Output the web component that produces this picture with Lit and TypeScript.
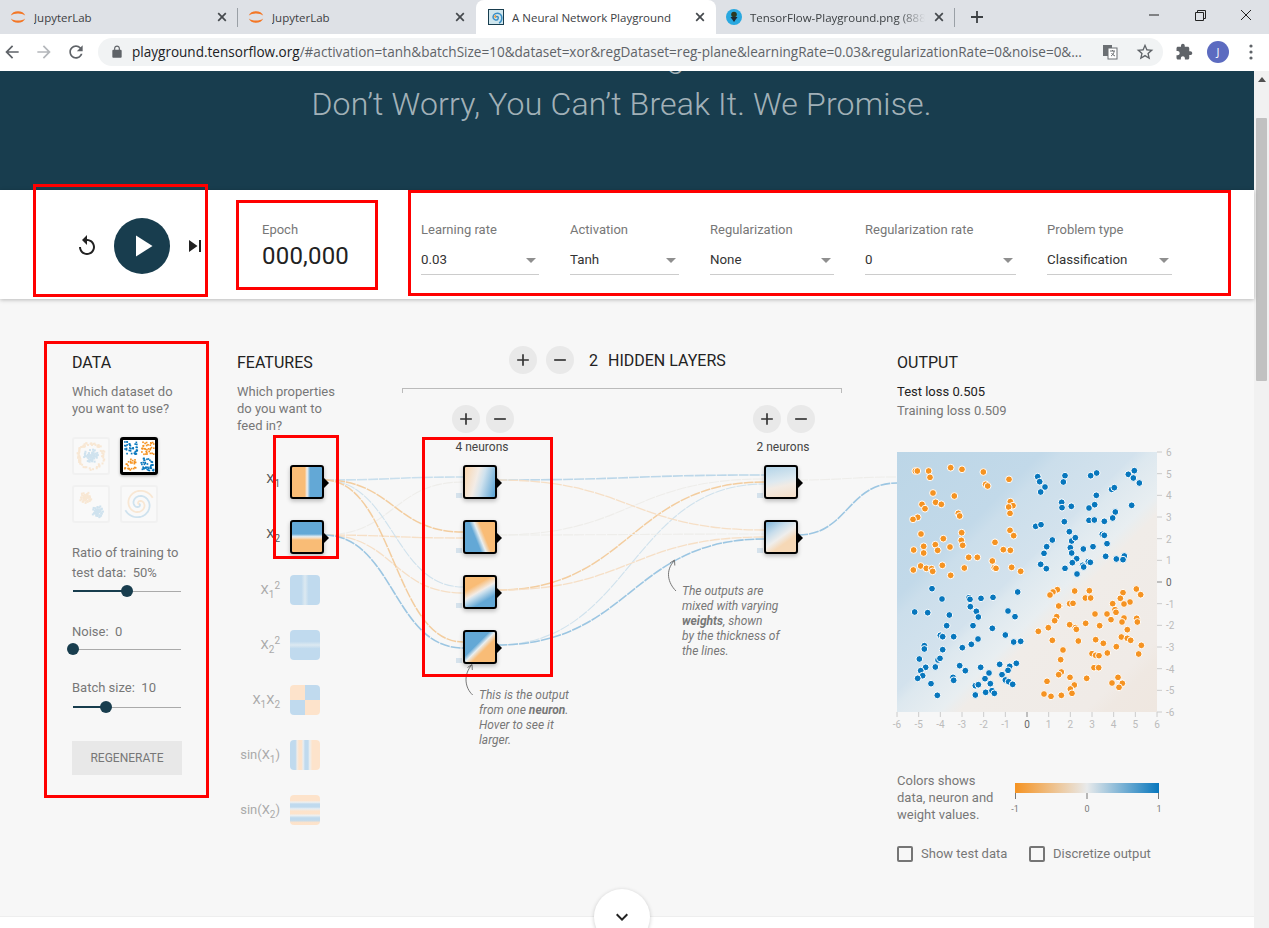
import { LitElement, html, css, svg } from 'lit';
import { customElement } from 'lit/decorators.js';

type Pt = [number, number];

const ORANGE = '#f59322';
const BLUE = '#0877bd';

// output plot samples, traced at 3x so 1 unit = 1/3 px
const ORANGE_PTS: Pt[] = [
  [105,93],[111,93],[145,93],[149,112],[211,83],[245,88],[309,96],[316,133],[322,138],[386,118],[158,159],[222,168],[166,187],[183,193],[125,193],[134,206],[112,232],[98,238],[234,220],[238,228],[390,185],[398,197],[385,201],[389,220],[122,282],[244,278],[389,271],[400,287],[189,296],[243,301],[344,307],[130,319],[165,314],[209,321],[247,316],[100,330],[172,331],[130,339],[369,329],[390,331],[265,352],[291,352],[336,363],[121,378],[138,385],[154,386],[157,394],[99,390],[186,376],[252,384],[342,383],[347,385],[394,382],[421,394],[211,406],
  [531,449],[518,456],[509,465],[583,453],[627,452],[768,447],[781,464],[728,458],[720,475],[615,474],[631,474],[749,486],[731,492],[697,491],[568,491],[578,490],[538,498],[535,498],[704,509],[707,517],[644,522],[680,522],[529,530],[523,542],[692,539],[731,534],[725,546],[769,535],[771,546],[616,550],[658,557],[568,554],[585,563],[588,568],[504,563],[474,574],[741,569],[723,591],[741,595],[751,601],[594,603],[646,599],[669,610],[516,601],[783,616],[708,620],[548,630],[635,641],[646,646],[656,647],[681,639],[775,642],[541,659],[641,683],[655,683],[543,696],[535,704],[619,715],[569,712],[500,724],[582,735],[695,729],[713,712],[726,730],[716,742],[570,747],[575,760],[491,762],[512,769],[543,766],
];
const BLUE_PTS: Pt[] = [
  [472,110],[478,125],[554,107],[549,126],[631,107],[649,99],[744,103],[762,92],[759,114],[777,129],[494,141],[481,156],[648,166],[694,148],[702,143],[544,187],[545,203],[573,199],[626,204],[643,194],[754,196],[705,216],[697,234],[552,245],[626,241],[642,240],[672,244],[466,259],[482,254],[567,275],[574,303],[585,293],[666,283],[672,286],[680,311],[516,300],[499,320],[491,340],[570,323],[574,339],[609,327],[638,320],[676,349],[708,357],[732,348],[728,359],[589,356],[576,368],[624,365],[630,367],[481,373],[498,386],[554,385],[607,376],[610,381],[590,402],
  [155,446],[412,456],[185,477],[266,473],[269,478],[302,475],[338,472],[270,500],[288,514],[294,531],[103,516],[142,518],[207,525],[383,513],[404,530],[199,557],[278,557],[336,565],[180,586],[187,590],[220,590],[293,597],[375,585],[400,606],[421,604],[273,613],[246,623],[132,617],[132,627],[187,629],[117,657],[173,660],[179,655],[136,682],[165,681],[238,677],[121,692],[127,707],[112,715],[255,692],[301,682],[358,673],[388,679],[408,670],[383,691],[326,699],[365,704],[218,712],[220,721],[314,716],[375,720],[385,725],[397,733],[152,731],[285,737],[294,734],[330,731],[171,766],[285,765],[316,757],[335,752],[342,760],
];

const BL = '#63a8d6';
const OR = '#f9bc76';
const FB = '#c0daee';
const FO = '#fde3cb';

interface FeatureNode { label: unknown; bg: string; }

const INPUTS: FeatureNode[] = [
  { label: html`X<sub>1</sub>`, bg: `linear-gradient(90deg, ${OR} 0 43%, #f2e2d2 48%, #dce8f0 52%, ${BL} 60%)` },
  { label: html`X<sub>2</sub>`, bg: `linear-gradient(180deg, ${BL} 0 40%, #dce8f0 48%, #f5e0c8 53%, ${OR} 60%)` },
  { label: html`X<sub>1</sub><sup>2</sup>`, bg: `linear-gradient(90deg, ${FB} 0 38%, #dce9f1 50%, ${FB} 62%)` },
  { label: html`X<sub>2</sub><sup>2</sup>`, bg: `linear-gradient(180deg, ${FB} 0 38%, #dce9f1 50%, ${FB} 62%)` },
  { label: html`X<sub>1</sub>X<sub>2</sub>`, bg: `conic-gradient(${FB} 0 25%, ${FO} 25% 50%, ${FB} 50% 75%, ${FO} 75%)` },
  { label: html`sin(X<sub>1</sub>)`, bg: `linear-gradient(90deg, ${FB} 0 18%, #f2ece6 24%, ${FO} 30% 38%, #e8eef2 44%, ${FB} 50% 60%, #eef0f0 66%, ${FO} 74%)` },
  { label: html`sin(X<sub>2</sub>)`, bg: `linear-gradient(180deg, ${FO} 0 18%, #eef0f0 24%, ${FB} 30% 40%, #e8eef2 46%, ${FO} 54% 62%, #eef0f0 68%, ${FB} 76% 84%, ${FO} 92%)` },
];

const LAYER1 = [
  `linear-gradient(105deg, #f8d5ae 0, #f3ece6 38%, #cfe2ee 56%, ${BL} 95%)`,
  `linear-gradient(68deg, ${BL} 0 38%, #e8eef0 50%, ${OR} 62%)`,
  `linear-gradient(150deg, ${OR} 0 30%, #f3ece6 48%, #cfe2ee 54%, ${BL} 75%)`,
  `linear-gradient(135deg, ${BL} 0 40%, #e8eef0 50%, ${OR} 62%)`,
];
const LAYER2 = [
  `linear-gradient(168deg, #b3d4e8 0, #dde9f0 45%, #f2ebe4 62%, #f6dfc8 100%)`,
  `linear-gradient(145deg, #7fb5da 0, #c9deec 30%, #efeeec 50%, #f6d8b6 68%)`,
];

const STRONG_O = { c: '#f3cd9f', w: 1.5 };
const SOFT_O = { c: '#f6dfc6', w: 1.3 };
const STRONG_B = { c: '#9cc6e2', w: 1.6 };
const SOFT_B = { c: '#d0e2ed', w: 1.1 };
const FAINT = { c: '#eeedea', w: 1.1 };

// [x0, y0, x1, y1, style], relative to the network box
const LINKS: [number, number, number, number, { c: string; w: number }][] = [
  [87, 182, 226, 129, FAINT],
  [87, 127, 226, 124, { c: '#c9dfed', w: 1.6 }],
  [87, 127, 226, 179, STRONG_O],
  [87, 182, 226, 185, SOFT_O],
  [87, 127, 226, 234, SOFT_B],
  [87, 182, 226, 240, SOFT_O],
  [87, 127, 226, 289, STRONG_O],
  [87, 182, 226, 295, STRONG_B],
  [260, 127, 527, 122, { c: '#bcd7e9', w: 1.6 }],
  [260, 182, 527, 126, FAINT],
  [260, 237, 527, 129, STRONG_O],
  [260, 292, 527, 131, SOFT_B],
  [260, 127, 527, 177, SOFT_O],
  [260, 182, 527, 181, FAINT],
  [260, 237, 527, 184, SOFT_O],
  [260, 292, 527, 186, STRONG_B],
  [561, 127, 660, 124, FAINT],
  [561, 182, 660, 130, STRONG_B],
];

const curve = (x0: number, y0: number, x1: number, y1: number) => {
  const m = (x0 + x1) / 2;
  return `M${x0} ${y0}C${m} ${y0} ${m} ${y1} ${x1} ${y1}`;
};

// tiny repeatable random so the dataset thumbnails stay the same on every load
const rng = (seed: number) => () => {
  seed = (seed * 16807) % 2147483647;
  return seed / 2147483647;
};

const xorDots = () => {
  const r = rng(7);
  const out = [];
  for (let i = 0; i < 170; i++) {
    const x = r() * 30 + 1;
    const y = r() * 30 + 1;
    if (Math.abs(x - 16) < 2 || Math.abs(y - 16) < 2) continue;
    const c = (x - 16) * (y - 16) > 0 ? BLUE : ORANGE;
    out.push(svg`<rect x=${x} y=${y} width="1.7" height="1.7" fill=${c}></rect>`);
  }
  return out;
};

const circleDots = () => {
  const r = rng(11);
  const out = [];
  for (let i = 0; i < 70; i++) {
    const a = r() * 6.28;
    const d = r() * 7;
    out.push(svg`<rect x=${16 + Math.cos(a) * d} y=${16 + Math.sin(a) * d} width="2" height="2" fill=${BLUE}></rect>`);
    const e = 11 + r() * 3;
    out.push(svg`<rect x=${16 + Math.cos(a * 3) * e} y=${16 + Math.sin(a * 3) * e} width="2" height="2" fill=${ORANGE}></rect>`);
  }
  return out;
};

const gaussDots = () => {
  const r = rng(23);
  const out = [];
  for (let i = 0; i < 60; i++) {
    const a = r() * 6.28;
    const d = r() * 6;
    out.push(svg`<rect x=${11 + Math.cos(a) * d} y=${10 + Math.sin(a) * d} width="2" height="2" fill=${ORANGE}></rect>`);
    out.push(svg`<rect x=${23 + Math.sin(a) * d} y=${24 + Math.cos(a) * d} width="2" height="2" fill=${BLUE}></rect>`);
  }
  return out;
};

const spiral = (offset: number) => {
  let d = '';
  for (let t = 0; t <= 100; t++) {
    const a = (t / 100) * 9 + offset;
    const rad = (t / 100) * 15;
    d += `${t ? 'L' : 'M'}${(17 + Math.cos(a) * rad).toFixed(1)} ${(17 + Math.sin(a) * rad).toFixed(1)}`;
  }
  return d;
};

const TICKS = [-6, -5, -4, -3, -2, -1, 0, 1, 2, 3, 4, 5, 6];

@customElement('app-root')
export class AppRoot extends LitElement {
  static styles = css`
    :host {
      display: block;
      width: 1269px;
      height: 928px;
      overflow: hidden;
      position: relative;
      font-family: Roboto, "Liberation Sans", sans-serif;
      color: #777;
      background: #fff;
    }

    /* browser chrome */
    .tabstrip {
      display: flex;
      align-items: stretch;
      height: 34px;
      background: #dee1e6;
      font-family: "Open Sans", sans-serif;
      font-size: 11.5px;
      color: #3c4043;
    }
    .tab {
      box-sizing: border-box;
      width: 238px;
      display: flex;
      align-items: center;
      gap: 8px;
      padding: 0 10px;
      position: relative;
      white-space: nowrap;
    }
    .tab.sep::after {
      content: "";
      position: absolute;
      right: 0;
      top: 8px;
      bottom: 7px;
      width: 1px;
      background: #9aa0a6;
    }
    .tab.active {
      width: 240px;
      background: #fff;
      border-radius: 8px 8px 0 0;
      padding-left: 12px;
    }
    .tab .name {
      flex: 1;
      overflow: hidden;
    }
    .tab .name.fade {
      -webkit-mask-image: linear-gradient(90deg, #000 85%, transparent);
      mask-image: linear-gradient(90deg, #000 85%, transparent);
    }
    .tab .close {
      flex: none;
      width: 12px;
      height: 12px;
    }
    .newtab {
      width: 16px;
      height: 16px;
      margin: 9px 0 0 14px;
    }
    .winctl {
      margin-left: auto;
      display: flex;
      align-items: flex-start;
    }
    .winctl svg {
      width: 46px;
      height: 30px;
    }
    .toolbar {
      height: 37px;
      box-sizing: border-box;
      display: flex;
      align-items: center;
      background: #fff;
      padding: 0 0 2px 2px;
    }
    .navicon {
      width: 20px;
      height: 20px;
      margin-right: 12px;
      fill: #5f6368;
    }
    .omnibox {
      width: 1065px;
      height: 28px;
      box-sizing: border-box;
      border-radius: 14px;
      background: #f1f3f4;
      display: flex;
      align-items: center;
      padding: 0 8px 0 12px;
      font-family: "Open Sans", sans-serif;
      font-size: 13.55px;
      color: #5f6368;
      white-space: nowrap;
    }
    .omnibox .host { color: #202124; }
    .omnibox .url {
      margin-left: 8px;
      flex: none;
    }
    .omnibox svg { flex: none; }
    .omnibox .star { margin-left: 17px; }
    .omnibox .trans { margin-left: auto; }
    .tools {
      display: flex;
      align-items: center;
      fill: #5f6368;
    }
    .avatar {
      width: 22px;
      height: 22px;
      border-radius: 50%;
      background: #5c6bc0;
      color: #fff;
      font: 11px "Open Sans", sans-serif;
      display: flex;
      align-items: center;
      justify-content: center;
      margin: 0 20px 0 14px;
    }

    /* page + scrollbar */
    .window { display: flex; height: 857px; }
    .page { flex: 1; min-width: 0; display: flex; flex-direction: column; }
    .scrollbar {
      width: 15px;
      background: #f1f1f1;
      display: flex;
      flex-direction: column;
      align-items: center;
    }
    .scrollbar .up {
      width: 0;
      height: 0;
      margin-top: 6px;
      border: 4px solid transparent;
      border-top: 0;
      border-bottom: 5px solid #505050;
    }
    .scrollbar .thumb {
      width: 100%;
      height: 267px;
      margin-top: 34px;
      background: #c1c1c1;
    }

    .hero {
      height: 119px;
      overflow: hidden;
      background: #183d4e;
      color: rgba(255, 255, 255, 0.62);
      font-size: 32px;
      font-weight: 300;
      line-height: 40px;
      letter-spacing: 0.18px;
      text-align: center;
      padding-right: 11px;
    }
    .hero p {
      margin: 0;
      white-space: nowrap;
    }
    .hero .above { margin-top: -34px; }
    .hero .above + p { margin-top: 7px; }

    .controls {
      height: 109px;
      box-sizing: border-box;
      background: #fff;
      box-shadow: 0 1px 4px rgba(0, 0, 0, 0.25);
      position: relative;
      display: flex;
      padding: 32px 0 0 75px;
    }
    .playback {
      display: flex;
      align-items: center;
      gap: 15px;
      height: 56px;
      margin-top: -4px;
    }
    .playback svg { width: 24px; height: 24px; fill: #222; }
    .playback .skip { margin-left: -2px; }
    .playbtn {
      width: 56px;
      height: 56px;
      border-radius: 50%;
      background: #183d4e;
      display: flex;
      align-items: center;
      justify-content: center;
    }
    .playback .playbtn svg { width: 36px; height: 36px; fill: #fff; }
    .epoch { margin-left: 55px; width: 159px; }
    .ctl-label { font-size: 13px; line-height: 16px; color: #777; }
    .epoch-val {
      font-size: 24px;
      line-height: 30px;
      margin-top: 3px;
      color: #222;
      letter-spacing: 0.2px;
    }
    .selects {
      display: grid;
      grid-template-columns: 118px 109px 124px 151px 125px;
      column-gap: 31px;
    }
    .select {
      margin-top: 13px;
      padding-bottom: 5px;
      line-height: 18px;
      font-size: 13.33px;
      color: #333;
      border-bottom: 1px solid #ccc;
      display: flex;
      justify-content: space-between;
      align-items: center;
    }
    .select i {
      width: 0;
      height: 0;
      margin-right: 3px;
      border: 5px solid transparent;
      border-bottom: 0;
      border-top: 5px solid #8f8f8f;
    }

    .workspace {
      height: 617px;
      box-sizing: border-box;
      display: flex;
      background: #f7f7f7;
      padding: 54px 0 0 72px;
    }
    h4 {
      margin: 0;
      padding-top: 1px;
      font-size: 16px;
      line-height: 18px;
      font-weight: 400;
      color: #222;
      text-transform: uppercase;
    }
    .note {
      margin: 11px 0 0;
      font-size: 13px;
      line-height: 17px;
      color: #777;
    }

    .data { width: 165px; flex: none; }
    .thumbs {
      display: grid;
      grid-template-columns: 38px 38px;
      gap: 10px;
      margin-top: 20px;
    }
    .thumb {
      box-sizing: border-box;
      width: 38px;
      height: 38px;
      border: 2px solid #f1f1f1;
      border-radius: 3px;
      background: #f9f9f9;
    }
    .thumb svg { display: block; width: 34px; height: 34px; opacity: 0.17; }
    .thumb.on { border: 3px solid #000; background: #fff; box-shadow: 0 1px 3px rgba(0, 0, 0, 0.3); }
    .thumb.on svg { width: 32px; height: 32px; opacity: 1; }
    .param { font-size: 13px; line-height: 20px; color: #777; }
    .ratio { margin-top: 20px; }
    .noise { margin-top: 23px; }
    .batch { margin-top: 21px; }
    .slider {
      position: relative;
      width: 108px;
      height: 16px;
      margin: 1px 0 0 1px;
      display: flex;
      align-items: center;
    }
    .slider.tight { margin-top: 0; }
    .slider.flush { margin-top: -1px; }
    .slider .fill { height: 2px; background: #183d4e; }
    .slider .rest { flex: 1; height: 1px; background: #aaa; }
    .slider .knob {
      position: absolute;
      top: 2px;
      width: 12px;
      height: 12px;
      margin-left: -6px;
      border-radius: 50%;
      background: #183d4e;
    }
    .regen {
      width: 110px;
      height: 34px;
      margin-top: 26px;
      background: #e8e8e8;
      color: #777;
      font-size: 12px;
      display: flex;
      align-items: center;
      justify-content: center;
      text-transform: uppercase;
    }

    /* network diagram */
    .net { position: relative; width: 660px; height: 560px; flex: none; }
    .net > svg {
      position: absolute;
      left: 0;
      top: 0;
      overflow: visible;
    }
    .net-head { display: flex; margin-top: -7px; position: relative; }
    .features-head { width: 165px; flex: none; padding-top: 7px; }
    .layers-head { width: 440px; }
    .layer-row {
      display: flex;
      align-items: center;
      gap: 9px;
      padding-left: 107px;
      height: 28px;
    }
    .layer-row .count { margin-left: 6px; font-size: 16px; color: #222; }
    .layer-row .word { margin-left: 1px; font-size: 16px; color: #222; text-transform: uppercase; }
    .bracket {
      height: 4px;
      margin-top: 14px;
      border: 1px solid #bbb;
      border-bottom: 0;
    }
    .round {
      width: 28px;
      height: 28px;
      border-radius: 50%;
      background: #e9e9e9;
      display: flex;
      align-items: center;
      justify-content: center;
      flex: none;
    }
    .round svg { width: 20px; height: 20px; fill: #333; }
    .round.abs { position: absolute; }
    .node {
      position: absolute;
      box-sizing: border-box;
      width: 34px;
      height: 34px;
      border: 2px solid #000;
      border-radius: 3px;
      box-shadow: 0 2px 4px rgba(0, 0, 0, 0.25);
    }
    .node::after {
      content: "";
      position: absolute;
      right: -7px;
      top: 11px;
      border: 5px solid transparent;
      border-right: 0;
      border-left: 5px solid #000;
    }
    .node.faded {
      width: 30px;
      height: 30px;
      border: 0;
      border-radius: 4px;
      box-shadow: none;
    }
    .node.faded::after { display: none; }
    .flabel {
      position: absolute;
      left: -17px;
      width: 60px;
      text-align: right;
      font-size: 13px;
      line-height: 20px;
      color: #aaa;
      white-space: nowrap;
    }
    .flabel.on { color: #555; }
    .flabel sub, .flabel sup { font-size: 10px; line-height: 0; }
    .nlabel {
      position: absolute;
      width: 80px;
      text-align: center;
      font-size: 12px;
      line-height: 14px;
      color: #444;
    }
    .bias {
      position: absolute;
      width: 6px;
      height: 5px;
      background: #d5e2ec;
    }
    .hint {
      position: absolute;
      margin: 0;
      font-size: 12px;
      line-height: 15px;
      font-style: italic;
      color: #777;
      white-space: nowrap;
    }

    /* output */
    .output { flex: 1; min-width: 0; }
    .loss { font-size: 13px; line-height: 20px; color: #777; }
    .loss.top { margin-top: 10px; line-height: 19px; color: #222; }
    .plot { display: block; margin-top: 31px; overflow: visible; }
    .legend { display: flex; margin-top: 35px; }
    .legend svg { overflow: visible; }
    .legend-text {
      width: 118px;
      flex: none;
      font-size: 13px;
      line-height: 17px;
      color: #777;
    }
    .checks { display: flex; margin-top: 23px; }
    .check {
      width: 132px;
      display: flex;
      align-items: center;
      gap: 8px;
      font-size: 13px;
      line-height: 16px;
      color: #777;
    }
    .check i {
      box-sizing: border-box;
      width: 16px;
      height: 16px;
      border: 2px solid #757575;
      border-radius: 2px;
    }

    .footer { height: 12px; background: #fff; border-top: 1px solid #eee; box-sizing: border-box; }
    .chevron {
      position: absolute;
      left: 594px;
      top: 889px;
      width: 56px;
      height: 56px;
      border-radius: 50%;
      background: #fff;
      box-shadow: 0 1px 4px rgba(0, 0, 0, 0.2);
      display: flex;
      align-items: center;
      justify-content: center;
    }
    .chevron svg { width: 24px; height: 24px; fill: #222; }

    /* red review boxes drawn on top of the screenshot */
    .mark {
      position: absolute;
      box-sizing: border-box;
      border: 3px solid #f00;
      pointer-events: none;
    }
  `;

  private closeIcon() {
    return html`<svg class="close" viewBox="0 0 12 12"><path d="M2.2 2.2l7.6 7.6M9.8 2.2l-7.6 7.6" stroke="#45494d" stroke-width="1.7" fill="none"/></svg>`;
  }

  private jupyterIcon() {
    return html`<svg width="16" height="16" viewBox="0 0 16 16" style="flex:none"><path d="M.8 6.5C2.500 .8 13.500 .8 15.200 6.500 12 3.800 4 3.800 .8 6.500z" fill="#f37726"/><path d="M.8 9.500C2.500 15.200 13.500 15.200 15.200 9.500 12 12.200 4 12.200 .8 9.500z" fill="#f37726"/></svg>`;
  }

  private slider(pct: number, cls = '') {
    return html`<div class="slider ${cls}">
      <div class="fill" style="width:${pct}%"></div>
      <div class="rest"></div>
      <div class="knob" style="left:${pct}%"></div>
    </div>`;
  }

  private renderChrome() {
    return html`
      <div class="tabstrip">
        <div class="tab sep">${this.jupyterIcon()}<span class="name">JupyterLab</span>${this.closeIcon()}</div>
        <div class="tab">${this.jupyterIcon()}<span class="name">JupyterLab</span>${this.closeIcon()}</div>
        <div class="tab active">
          <svg width="16" height="16" viewBox="0 0 16 16" style="flex:none">
            <rect x=".5" y=".5" width="15" height="15" fill="#cfe6ee" stroke="#183d4e"/>
            <path d="M8 8c1-1.5 3 0 2 2s-5 1-5-2 4-5 7-3 2 8-1 9" fill="none" stroke="#3b8fc4" stroke-width="1.5"/>
            <path d="M8 8c-1 1-2-1 0-1.5" fill="none" stroke="#f59322" stroke-width="1.2"/>
          </svg>
          <span class="name">A Neural Network Playground</span>${this.closeIcon()}
        </div>
        <div class="tab sep" style="width:239px">
          <svg width="16" height="16" viewBox="0 0 16 16" style="flex:none">
            <circle cx="8" cy="8" r="8" fill="#29a8e0"/>
            <circle cx="8" cy="5.5" r="2.8" fill="#2c3a22"/>
            <path d="M4.5 8h7L8 13z" fill="#1d2a33"/>
          </svg>
          <span class="name fade">TensorFlow-Playground.png (888</span>${this.closeIcon()}
        </div>
        <svg class="newtab" viewBox="0 0 16 16"><path d="M8 2v12M2 8h12" stroke="#3c4043" stroke-width="1.8"/></svg>
        <div class="winctl">
          <svg viewBox="0 0 46 30"><path d="M18 15h10" stroke="#222" stroke-width="1"/></svg>
          <svg viewBox="0 0 46 30"><path d="M18.5 12.5h8v8h-8zM20.5 12.5v-2h8v8h-2" stroke="#222" stroke-width="1" fill="none"/></svg>
          <svg viewBox="0 0 46 30"><path d="M18 10l10 10M28 10l-10 10" stroke="#222" stroke-width="1"/></svg>
        </div>
      </div>
      <div class="toolbar">
        <svg class="navicon" viewBox="0 0 24 24"><path d="M20 11H7.83l5.59-5.59L12 4l-8 8 8 8 1.41-1.41L7.83 13H20v-2z"/></svg>
        <svg class="navicon" viewBox="0 0 24 24" style="fill:#b4b7bb"><path d="M4 11h12.17l-5.59-5.59L12 4l8 8-8 8-1.41-1.41L16.17 13H4v-2z"/></svg>
        <svg class="navicon" viewBox="0 0 24 24"><path d="M17.65 6.35C16.2 4.9 14.21 4 12 4c-4.42 0-7.99 3.58-7.99 8s3.57 8 7.99 8c3.73 0 6.84-2.55 7.73-6h-2.08c-.82 2.33-3.04 4-5.65 4-3.31 0-6-2.69-6-6s2.69-6 6-6c1.66 0 3.14.69 4.22 1.78L13 11h7V4l-2.35 2.35z"/></svg>
        <div class="omnibox">
          <svg width="14" height="14" viewBox="0 0 24 24" fill="#5f6368"><path d="M18 8h-1V6c0-2.76-2.24-5-5-5S7 3.24 7 6v2H6c-1.1 0-2 .9-2 2v10c0 1.1.9 2 2 2h12c1.1 0 2-.9 2-2V10c0-1.1-.9-2-2-2zM9 6c0-1.66 1.34-3 3-3s3 1.34 3 3v2H9V6z"/></svg>
          <div class="url"><span class="host">playground.tensorflow.org</span>/#activation=tanh&amp;batchSize=10&amp;dataset=xor&amp;regDataset=reg-plane&amp;learningRate=0.03&amp;regularizationRate=0&amp;noise=0&amp;...</div>
          <svg class="trans" width="16" height="16" viewBox="0 0 16 16"><rect x="1" y="1" width="9" height="11" fill="#6b6f73"/><rect x="6" y="4" width="9" height="11" fill="#fff" stroke="#6b6f73"/><path d="M8 7h5M10.5 6v1M9 12c2-1 3-3 3-5M9.5 9c1 1.500 2 2.500 3.500 3" stroke="#6b6f73" fill="none"/></svg>
          <svg class="star" width="20" height="20" viewBox="0 0 24 24" fill="#5f6368"><path d="M22 9.24l-7.19-.62L12 2 9.190 8.630 2 9.240l5.460 4.730L5.820 21 12 17.270 18.180 21l-1.630-7.030L22 9.240zM12 15.400l-3.760 2.270 1-4.280-3.320-2.880 4.380-.38L12 6.100l1.710 4.040 4.380.38-3.320 2.880 1 4.280L12 15.400z"/></svg>
        </div>
        <div class="tools">
          <svg style="margin-left:12px" width="18" height="18" viewBox="0 0 24 24"><path d="M20.500 11H19V7c0-1.100-.9-2-2-2h-4V3.500C13 2.120 11.880 1 10.500 1S8 2.120 8 3.500V5H4c-1.100 0-1.990.9-1.990 2v3.800H3.500c1.490 0 2.700 1.210 2.700 2.700s-1.210 2.700-2.700 2.700H2V20c0 1.100.9 2 2 2h3.800v-1.500c0-1.490 1.210-2.700 2.700-2.700 1.490 0 2.700 1.210 2.700 2.700V22H17c1.100 0 2-.9 2-2v-4h1.500c1.380 0 2.500-1.120 2.500-2.500S21.880 11 20.500 11z"/></svg>
          <div class="avatar">J</div>
          <svg width="4" height="16" viewBox="0 0 4 16"><circle cx="2" cy="2" r="1.600"/><circle cx="2" cy="8" r="1.600"/><circle cx="2" cy="14" r="1.600"/></svg>
        </div>
      </div>
    `;
  }

  private renderControls() {
    const selects = [
      ['Learning rate', '0.03'],
      ['Activation', 'Tanh'],
      ['Regularization', 'None'],
      ['Regularization rate', '0'],
      ['Problem type', 'Classification'],
    ];
    return html`
      <div class="controls">
        <div class="playback">
          <svg viewBox="0 0 24 24"><path d="M12 5V1L7 6l5 5V7c3.310 0 6 2.690 6 6s-2.690 6-6 6-6-2.690-6-6H4c0 4.420 3.580 8 8 8s8-3.580 8-8-3.580-8-8-8z"/></svg>
          <div class="playbtn"><svg viewBox="0 0 24 24"><path d="M8 5v14l11-7z"/></svg></div>
          <svg class="skip" viewBox="0 0 24 24"><path d="M6 18l8.500-6L6 6v12zM16 6v12h2V6h-2z"/></svg>
        </div>
        <div class="epoch">
          <div class="ctl-label">Epoch</div>
          <div class="epoch-val">000,000</div>
        </div>
        <div class="selects">
          ${selects.map(([label, value]) => html`<div>
            <div class="ctl-label">${label}</div>
            <div class="select">${value}<i></i></div>
          </div>`)}
        </div>
      </div>
    `;
  }

  private renderData() {
    return html`
      <div class="data">
        <h4>Data</h4>
        <p class="note">Which dataset do<br />you want to use?</p>
        <div class="thumbs">
          <div class="thumb"><svg viewBox="0 0 34 34">${circleDots()}</svg></div>
          <div class="thumb on"><svg viewBox="0 0 33 33">${xorDots()}</svg></div>
          <div class="thumb"><svg viewBox="0 0 34 34">${gaussDots()}</svg></div>
          <div class="thumb"><svg viewBox="0 0 34 34">
            <path d=${spiral(0)} fill="none" stroke=${BLUE} stroke-width="1.800"/>
            <path d=${spiral(3.14)} fill="none" stroke=${ORANGE} stroke-width="1.800"/>
          </svg></div>
        </div>
        <div class="param ratio">Ratio of training to<br />test data:&nbsp; 50%</div>
        ${this.slider(50, 'tight')}
        <div class="param noise">Noise:&nbsp; 0</div>
        ${this.slider(0, 'flush')}
        <div class="param batch">Batch size:&nbsp; 10</div>
        ${this.slider(30.5)}
        <div class="regen">Regenerate</div>
      </div>
    `;
  }

  private renderNet() {
    const plus = html`<svg viewBox="0 0 24 24"><path d="M19 13h-6v6h-2v-6H5v-2h6V5h2v6h6v2z"/></svg>`;
    const minus = html`<svg viewBox="0 0 24 24"><path d="M19 13H5v-2h14v2z"/></svg>`;
    return html`
      <div class="net">
        <svg width="660" height="560" fill="none">
          ${LINKS.map(([x0, y0, x1, y1, s]) => svg`<path d=${curve(x0, y0, x1, y1)} stroke=${s.c} stroke-width=${s.w} stroke-dasharray="10 1"></path>`)}
          <path d="M235.700 342C228 335 226 322 234.700 312M230.500 314.500l4.500-3 .3 5.500" stroke="#777"/>
          <path d="M439 238C431 230 428 218 437 208M433 210l4.500-3 .3 5.500" stroke="#777"/>
        </svg>
        <div class="net-head">
          <div class="features-head">
            <h4>Features</h4>
            <p class="note">Which properties<br />do you want to<br />feed in?</p>
          </div>
          <div class="layers-head">
            <div class="layer-row">
              <div class="round">${plus}</div>
              <div class="round">${minus}</div>
              <span class="count">2</span>
              <span class="word">Hidden layers</span>
            </div>
            <div class="bracket"></div>
          </div>
        </div>

        ${[215, 516].map((x) => html`
          <div class="round abs" style="left:${x}px;top:52px">${plus}</div>
          <div class="round abs" style="left:${x + 34}px;top:52px">${minus}</div>
        `)}
        <div class="nlabel" style="left:205px;top:87px">4 neurons</div>
        <div class="nlabel" style="left:506px;top:87px">2 neurons</div>

        ${INPUTS.map((n, i) => {
          const top = 112 + i * 55;
          return html`
            <div class="flabel ${i < 2 ? 'on' : ''}" style="top:${top + (i < 2 ? 4 : 5)}px">${n.label}</div>
            <div class="node ${i < 2 ? '' : 'faded'}" style="left:53px;top:${top}px;background:${n.bg}"></div>
          `;
        })}
        ${LAYER1.map((bg, i) => html`
          <div class="bias" style="left:219px;top:${140 + i * 55}px"></div>
          <div class="node" style="left:226px;top:${112 + i * 55}px;background:${bg}"></div>
        `)}
        ${LAYER2.map((bg, i) => html`
          <div class="bias" style="left:520px;top:${140 + i * 55}px"></div>
          <div class="node" style="left:527px;top:${112 + i * 55}px;background:${bg}"></div>
        `)}

        <p class="hint" style="left:242px;top:335px">This is the output<br />from one <b>neuron</b>.<br />Hover to see it<br />larger.</p>
        <p class="hint" style="left:445px;top:231px">The outputs are<br />mixed with varying<br /><b>weights</b>, shown<br />by the thickness of<br />the lines.</p>
      </div>
    `;
  }

  private renderPlot() {
    const unit = 260 / 12;
    return html`
      <svg class="plot" width="285" height="285" viewBox="0 0 285 285">
        <defs>
          <linearGradient id="heat" gradientUnits="userSpaceOnUse" x1="0" y1="0" x2="260" y2="260">
            <stop offset="0" stop-color="#bcd6e7" />
            <stop offset=".28" stop-color="#c2d9e9" />
            <stop offset=".32" stop-color="#cbdeeb" />
            <stop offset=".46" stop-color="#d3e2ed" />
            <stop offset=".49" stop-color="#dde8ef" />
            <stop offset=".58" stop-color="#e8eef1" />
            <stop offset=".62" stop-color="#f0ece8" />
            <stop offset=".86" stop-color="#f0ebe7" />
            <stop offset=".9" stop-color="#efe8e2" />
            <stop offset="1" stop-color="#efe7e0" />
          </linearGradient>
        </defs>
        <rect width="260" height="260" fill="url(#heat)"></rect>
        ${ORANGE_PTS.map(([x, y]) => svg`<circle cx=${(x - 50) / 3} cy=${(y - 36) / 3} r="3.4" fill=${ORANGE} stroke="#fff" stroke-width="1"></circle>`)}
        ${BLUE_PTS.map(([x, y]) => svg`<circle cx=${(x - 50) / 3} cy=${(y - 36) / 3} r="3.4" fill=${BLUE} stroke="#fff" stroke-width="1"></circle>`)}
        ${TICKS.map((t) => {
          const p = (t + 6) * unit;
          const fill = t === 0 ? '#666' : '#bbb';
          return svg`
            <path d="M${p} 260v5M260 ${260 - p}h5" stroke=${t === 0 ? '#888' : '#ccc'}></path>
            <text x=${p} y="276" fill=${fill} font-size="10" text-anchor="middle">${t}</text>
            <text x="269" y=${264 - p} fill=${fill} font-size="10">${t}</text>
          `;
        })}
      </svg>
    `;
  }

  private renderOutput() {
    return html`
      <div class="output">
        <h4>Output</h4>
        <div class="loss top">Test loss 0.505</div>
        <div class="loss">Training loss 0.509</div>
        ${this.renderPlot()}
        <div class="legend">
          <div class="legend-text">Colors shows<br />data, neuron and<br />weight values.</div>
          <svg width="150" height="40" viewBox="0 0 150 40">
            <defs>
              <linearGradient id="scale">
                <stop offset="0" stop-color=${ORANGE} />
                <stop offset=".5" stop-color="#e8eaeb" />
                <stop offset="1" stop-color=${BLUE} />
              </linearGradient>
            </defs>
            <rect y="11" width="144" height="10" fill="url(#scale)"></rect>
            <path d="M.5 21v6M72 21v6M143.500 21v6" stroke="#777"></path>
            <text x="0" y="40" fill="#777" font-size="9" text-anchor="middle">-1</text>
            <text x="72" y="40" fill="#777" font-size="9" text-anchor="middle">0</text>
            <text x="144" y="40" fill="#777" font-size="9" text-anchor="middle">1</text>
          </svg>
        </div>
        <div class="checks">
          <div class="check"><i></i>Show test data</div>
          <div class="check"><i></i>Discretize output</div>
        </div>
      </div>
    `;
  }

  render() {
    const marks = [
      [33, 184, 175, 113],
      [236, 200, 142, 90],
      [408, 190, 823, 106],
      [44, 341, 165, 457],
      [273, 435, 66, 124],
      [422, 437, 131, 240],
    ];
    return html`
      ${this.renderChrome()}
      <div class="window">
        <div class="page">
          <div class="hero">
            <p class="above">Tinker With a Neural Network Right Here in Your Browser.</p>
            <p>Don’t Worry, You Can’t Break It. We Promise.</p>
          </div>
          ${this.renderControls()}
          <div class="workspace">
            ${this.renderData()}
            ${this.renderNet()}
            ${this.renderOutput()}
          </div>
          <div class="footer"></div>
        </div>
        <div class="scrollbar"><div class="up"></div><div class="thumb"></div></div>
      </div>
      <div class="chevron"><svg viewBox="0 0 24 24"><path d="M16.590 8.590L12 13.170 7.410 8.590 6 10l6 6 6-6z"/></svg></div>
      ${marks.map(([x, y, w, h]) => html`<div class="mark" style="left:${x}px;top:${y}px;width:${w}px;height:${h}px"></div>`)}
    `;
  }
}
